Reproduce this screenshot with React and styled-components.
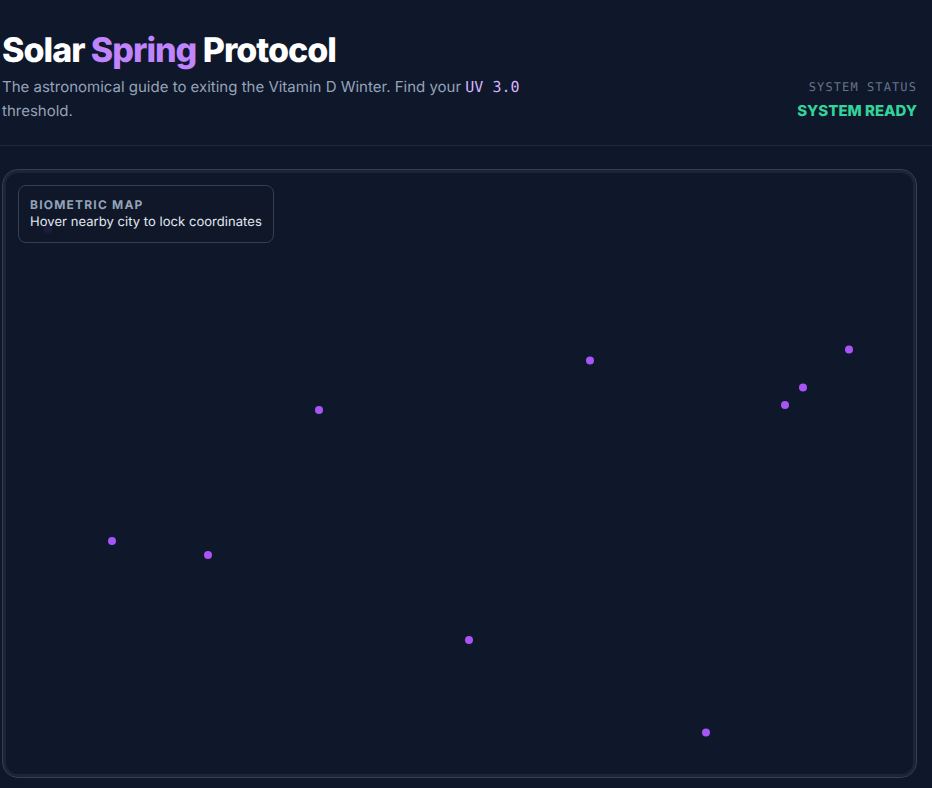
import React from "react";
import styled, { createGlobalStyle } from "styled-components";

const GlobalStyle = createGlobalStyle`
	html, body {
		margin: 0;
		background: #0f172a;
		overflow: hidden;
	}
	* {
		box-sizing: border-box;
	}
`;

const Page = styled.div`
	width: 932px;
	height: 788px;
	padding: 0 15px 10px 2px;
	background: #0f172a;
	font-family: Inter, "Liberation Sans", sans-serif;
	text-rendering: geometricPrecision;
	display: flex;
	flex-direction: column;
`;

const Header = styled.header`
	height: 146px;
	padding-top: 31px;
	margin-right: -15px;
	padding-right: 15px;
	margin-left: -2px;
	padding-left: 2px;
	border-bottom: 1px solid #1e293b;
	display: flex;
	justify-content: space-between;
	align-items: flex-start;
`;

const Title = styled.h1`
	margin: 0 0 4px;
	height: 40px;
	font-size: 34px;
	line-height: 40px;
	font-weight: 800;
	letter-spacing: -1px;
	color: #fff;
`;

const Accent = styled.span`
	color: #c084fc;
`;

const Subtitle = styled.p`
	margin: 0;
	width: 530px;
	font-size: 15px;
	line-height: 24px;
	color: #94a3b8;
`;

const Code = styled.code`
	font-family: "DejaVu Sans Mono", monospace;
	font-size: 15px;
	color: #d8b4fe;
`;

const Status = styled.div`
	margin-top: 48px;
	text-align: right;
`;

const StatusLabel = styled.div`
	font-family: "DejaVu Sans Mono", monospace;
	font-size: 12px;
	line-height: 16px;
	letter-spacing: 1.1px;
	color: #64748b;
`;

const StatusValue = styled.div`
	margin-top: 6px;
	font-size: 15px;
	line-height: 20px;
	font-weight: 800;
	color: #34d399;
`;

const MapFrame = styled.section`
	position: relative;
	flex: 1;
	margin-top: 23px;
	border: 1px solid #334155;
	border-radius: 16px;
	box-shadow: inset 0 0 0 3px #1e293bcc;
	background: #0f172a;
	overflow: hidden;
`;

// pins sit at half pixels in places, a transform keeps them all the same size
const Pin = styled.span`
	position: absolute;
	left: 0;
	top: 0;
	width: 8px;
	height: 8px;
	border-radius: 50%;
	background: #a855f7;
	transform: translate(${(p) => p.$x - 7}px, ${(p) => p.$y - 174}px);
`;

const Legend = styled.div`
	position: absolute;
	left: 15px;
	top: 15px;
	width: 256px;
	height: 58px;
	padding: 11px;
	border: 1px solid #334155;
	border-radius: 8px;
	background: #0f172ae8;
`;

const LegendTitle = styled.div`
	font-size: 12px;
	line-height: 16px;
	font-weight: 700;
	letter-spacing: 1.2px;
	color: #94a3b8;
`;

const LegendText = styled.div`
	font-size: 13px;
	line-height: 18px;
	letter-spacing: 0.05px;
	color: #e2e8f0;
`;

const pins = [
	[48, 229],
	[590, 360.5],
	[849, 349.5],
	[803, 387.5],
	[785, 405],
	[319, 410],
	[112, 541],
	[208, 555],
	[469, 640],
	[706, 732.5],
];

export default function App() {
	return (
		<Page>
			<GlobalStyle />
			<Header>
				<div>
					<Title>
						Solar <Accent>Spring</Accent> Protocol
					</Title>
					<Subtitle>
						The astronomical guide to exiting the Vitamin D Winter. Find your <Code>UV 3.0</Code> threshold.
					</Subtitle>
				</div>
				<Status>
					<StatusLabel>SYSTEM STATUS</StatusLabel>
					<StatusValue>SYSTEM READY</StatusValue>
				</Status>
			</Header>
			<MapFrame>
				{pins.map(([x, y]) => (
					<Pin key={`${x}-${y}`} $x={x} $y={y} />
				))}
				<Legend>
					<LegendTitle>BIOMETRIC MAP</LegendTitle>
					<LegendText>Hover nearby city to lock coordinates</LegendText>
				</Legend>
			</MapFrame>
		</Page>
	);
}
